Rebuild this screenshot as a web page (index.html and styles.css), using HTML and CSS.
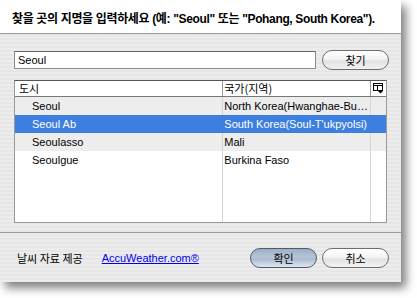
FILE: index.html
```html
<!DOCTYPE html>
<html>
<head>
<meta charset="utf-8">
<link rel="stylesheet" href="styles.css">
</head>
<body>
<div class="window">
  <div class="header">찾을 곳의 지명을 입력하세요 (예: "Seoul" 또는 "Pohang, South Korea").</div>
  <div class="main">
    <div class="search-row">
      <div class="input">Seoul</div>
      <div class="btn">찾기</div>
    </div>
    <div class="table">
      <div class="row head">
        <div class="c1">도시</div>
        <div class="c2">국가(지역)</div>
        <div class="c3">
          <svg width="11" height="11" viewBox="0 0 11 11">
            <rect x="0.5" y="0.5" width="9" height="7" fill="#fff" stroke="#000"/>
            <line x1="0.5" y1="2.5" x2="9.5" y2="2.5" stroke="#000"/>
            <line x1="4.5" y1="2.5" x2="4.5" y2="7.5" stroke="#000"/>
            <path d="M5 8 L10 8 L7.5 10.5 Z" fill="#000"/>
          </svg>
        </div>
      </div>
      <div class="row alt"><div class="c1 name">Seoul</div><div class="c2">North Korea(Hwanghae-Bu…</div><div class="c3"></div></div>
      <div class="row sel"><div class="c1 name">Seoul Ab</div><div class="c2">South Korea(Soul-T'ukpyolsi)</div><div class="c3"></div></div>
      <div class="row alt"><div class="c1 name">Seoulasso</div><div class="c2">Mali</div><div class="c3"></div></div>
      <div class="row"><div class="c1 name">Seoulgue</div><div class="c2">Burkina Faso</div><div class="c3"></div></div>
      <div class="row filler"><div class="c1"></div><div class="c2"></div><div class="c3"></div></div>
    </div>
  </div>
  <div class="footer">
    <span class="credit">날씨 자료 제공</span>
    <a class="link" href="#">AccuWeather.com®</a>
    <span class="spacer"></span>
    <div class="btn default">확인</div>
    <div class="btn">취소</div>
  </div>
</div>
</body>
</html>
```
FILE: styles.css
```css
html, body {
  margin: 0;
  padding: 0;
  background: #fff;
}
body {
  width: 417px;
  height: 298px;
  overflow: hidden;
  font-family: "Liberation Sans", "Noto Sans CJK KR", sans-serif;
  font-size: 11px;
  color: #000;
}
.window {
  width: 401px;
  height: 282px;
  display: flex;
  flex-direction: column;
  background: repeating-linear-gradient(#ececec 0px, #ececec 2px, #e6e6e6 2px, #e6e6e6 4px);
  box-shadow: 5px 6px 9px rgba(0,0,0,0.5);
}
.header {
  height: 34px;
  box-sizing: border-box;
  background: #fff;
  border-bottom: 1px solid #9a9a9a;
  font-weight: bold;
  font-size: 12px;
  padding: 9px 0 0 12px;
  letter-spacing: -0.35px;
  white-space: nowrap;
}
.main {
  padding: 16px 12px 0 14px;
  height: 199px;
  box-sizing: border-box;
  border-bottom: 1px solid #9a9a9a;
}
.search-row {
  display: flex;
  align-items: center;
  gap: 6px;
  height: 20px;
}
.input {
  width: 302px;
  height: 18px;
  box-sizing: border-box;
  background: #fff;
  border: 1px solid #8c8c8c;
  border-top-color: #666;
  padding: 2px 0 0 3px;
  font-size: 11px;
  line-height: 13px;
}
.btn {
  width: 67px;
  height: 20px;
  box-sizing: border-box;
  border: 1px solid #6e6e6e;
  border-radius: 10px;
  background: linear-gradient(#ffffff 0%, #f4f4f4 45%, #e2e2e2 55%, #f2f2f2 100%);
  text-align: center;
  line-height: 18px;
  font-size: 11px;
  font-family: "Noto Sans CJK KR", sans-serif;
}
.btn.default {
  border-color: #4f5a66;
  background: linear-gradient(#9cafc4 0%, #b6c6d8 45%, #a9bbcf 55%, #dfe8f2 100%);
}
.table {
  margin-top: 10px;
  width: 373px;
  height: 143px;
  box-sizing: border-box;
  background: #fff;
  border: 1px solid #999;
  border-top-color: #555;
  display: flex;
  flex-direction: column;
}
.row {
  display: flex;
  height: 18px;
  line-height: 18px;
}
.row.head {
  height: 15px;
  line-height: 14px;
  border-bottom: 1px solid #777;
  font-family: "Noto Sans CJK KR", sans-serif;
}
.row.alt { background: #ededed; }
.row.sel { background: #3d7fde; color: #fff; }
.row.filler { flex: 1; }
.c1 {
  width: 206px;
  padding-left: 4px;
  border-right: 1px solid #d4d4d4;
  white-space: nowrap;
  overflow: hidden;
}
.c1.name { padding-left: 17px; width: 193px; }
.c2 {
  width: 148px;
  padding-left: 1px;
  border-right: 1px solid #d4d4d4;
  white-space: nowrap;
  overflow: hidden;
}
.c3 {
  width: 15px;
  display: flex;
  align-items: center;
  justify-content: center;
}
.head .c1, .head .c2 { border-right-color: #999; }
.sel .c1, .sel .c2 { border-right-color: #3d7fde; }
.footer {
  flex: 1;
  display: flex;
  align-items: center;
  padding: 0 12px 0 17px;
  gap: 5px;
}
.credit {
  font-family: "Noto Sans CJK KR", sans-serif;
  font-size: 11px;
  margin-right: 14px;
}
.link {
  color: #0000ee;
  text-decoration: underline;
}
.spacer { flex: 1; }
```
